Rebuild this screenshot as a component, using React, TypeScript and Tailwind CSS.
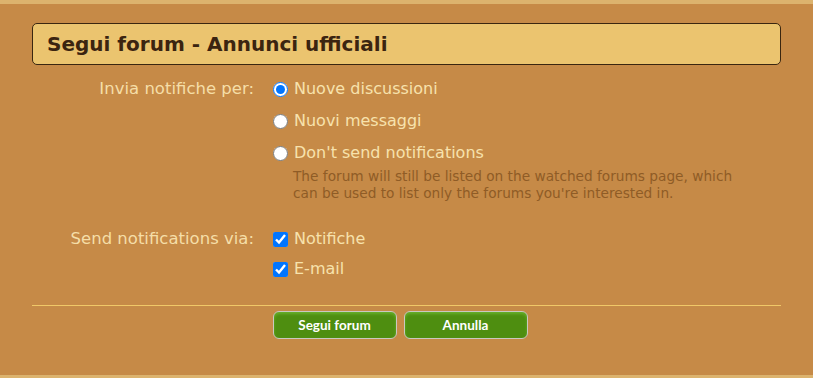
export default function App() {
  return (
    <div className="min-h-[378px] bg-[#c68a47] border-t-4 border-b-4 border-[#dcb36e] font-['DejaVu_Sans',Verdana,sans-serif]">
      <div className="px-8 pt-[19px] pb-[36px]">
        <div className="flex h-[42px] items-center rounded-[5px] border border-[#3a2610] bg-[#ebc46f] px-[14px]">
          <h2 className="text-[20px] font-bold text-[#3b2410]">Segui forum - Annunci ufficiali</h2>
        </div>

        <div className="mt-[12px] grid grid-cols-[222px_1fr] gap-x-[19px]">
          <div className="text-right text-[16.5px] leading-[24px] text-[#f5dea8]">Invia notifiche per:</div>
          <div className="flex flex-col gap-[8px]">
            <label className="flex items-center gap-[6px] text-[16px] leading-[24px] text-[#f7e2ad]">
              <input type="radio" name="notify" defaultChecked className="h-[15px] w-[15px]" />
              Nuove discussioni
            </label>
            <label className="flex items-center gap-[6px] text-[16px] leading-[24px] text-[#f7e2ad]">
              <input type="radio" name="notify" className="h-[15px] w-[15px]" />
              Nuovi messaggi
            </label>
            <div>
              <label className="flex items-center gap-[6px] text-[16px] leading-[24px] text-[#f7e2ad]">
                <input type="radio" name="notify" className="h-[15px] w-[15px]" />
                Don't send notifications
              </label>
              <p className="mt-[3px] pl-[20px] text-[13.7px] leading-[17px] text-[#8f5c26]">
                The forum will still be listed on the watched forums page, which
                <br />
                can be used to list only the forums you're interested in.
              </p>
            </div>
          </div>

          <div className="mt-[25px] text-right text-[16.5px] leading-[24px] text-[#f5dea8]">Send notifications via:</div>
          <div className="mt-[25px] flex flex-col gap-[6px]">
            <label className="flex items-center gap-[6px] text-[16px] leading-[24px] text-[#f7e2ad]">
              <input type="checkbox" defaultChecked className="h-[15px] w-[15px]" />
              Notifiche
            </label>
            <label className="flex items-center gap-[6px] text-[16px] leading-[24px] text-[#f7e2ad]">
              <input type="checkbox" defaultChecked className="h-[15px] w-[15px]" />
              E-mail
            </label>
          </div>
        </div>

        <div className="mt-[24px] border-t border-[#f0c868] pt-[5px]">
          <div className="flex justify-center gap-[7px] pr-[13px]">
            <button className="h-[28px] w-[124px] rounded-[6px] border border-[#c9c9c0] bg-[#4e8e10] font-['Lato',sans-serif] text-[13.5px] font-bold text-white shadow-[inset_0_2px_3px_rgba(120,200,60,0.6)]">
              Segui forum
            </button>
            <button className="h-[28px] w-[124px] rounded-[6px] border border-[#c9c9c0] bg-[#4e8e10] font-['Lato',sans-serif] text-[13.5px] font-bold text-white shadow-[inset_0_2px_3px_rgba(120,200,60,0.6)]">
              Annulla
            </button>
          </div>
        </div>
      </div>
    </div>
  );
}
